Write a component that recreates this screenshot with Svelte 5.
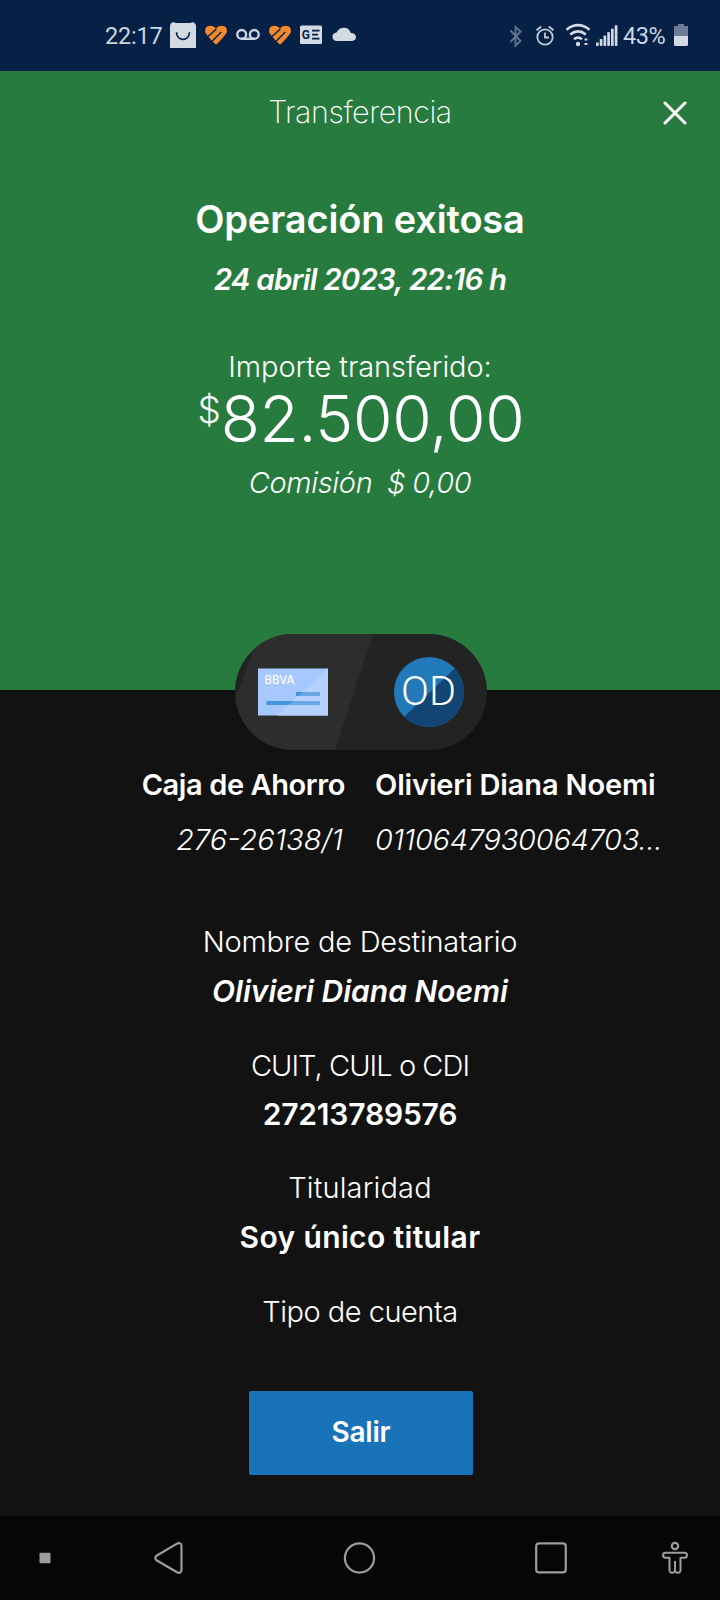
<script>
  // Transfer receipt data
  let title = 'Transferencia';
  let status = 'Operación exitosa';
  let date = '24 abril 2023, 22:16 h';
  let amount = '82.500,00';
  let fee = 'Comisión\u00a0 $ 0,00';

  let details = [
    { label: 'Nombre de Destinatario', value: 'Olivieri Diana Noemi', kind: 'name' },
    { label: 'CUIT, CUIL o CDI', value: '27213789576', kind: 'cuit' },
    { label: 'Titularidad', value: 'Soy único titular', kind: 'holder' },
    { label: 'Tipo de cuenta', value: '', kind: 'type' }
  ];

  // Bars of the mobile signal icon, left to right
  let signalBars = [0, 1, 2, 3, 4, 5];
</script>

{#snippet heart()}
  <svg class="heart" width="22" height="28" viewBox="204 21 22 28">
    <path d="M215 44.300Q213 44 204.800 33.500Q203 29 206 26.600Q210.500 24.300 215 28.200Q219.500 24.300 224 26.600Q227 29 225.200 33.500Q217 44 215 44.300z" fill="#f58a2c" />
    <path d="M205.500 38L215.500 28.800M210.800 41.500L220.300 32" fill="none" stroke="#07214a" stroke-width="1.500" />
  </svg>
{/snippet}

<div class="screen">
  <div class="status-bar">
    <span class="clock">22:17</span>
    <div class="notifications">
      <svg width="26" height="28" viewBox="170 21 26 28">
        <path d="M173 22.300h1.200q.6 0 1.200.7h15.400q.5-.7 1.200-.7h1q3 1 3 4V48h-26V26.500q0-3.500 3-4.200z" fill="#d3dae3" />
        <path d="M176.500 32.300c.5 9.400 12.500 9.400 13 0" fill="none" stroke="#07214a" stroke-width="1.700" />
      </svg>
      {@render heart()}
      <svg width="24" height="28" viewBox="235 21 24 28">
        <g fill="none" stroke="#ccd5e0" stroke-width="2.400">
          <circle cx="240.700" cy="34.400" r="4.400" />
          <circle cx="253.300" cy="34.400" r="4.400" />
          <path d="M240.700 38.800h12.600" />
        </g>
      </svg>
      {@render heart()}
      <svg width="22" height="28" viewBox="300 21 22 28">
        <rect x="300" y="25.500" width="22" height="18.500" rx="1.500" fill="#d3dae3" />
        <text x="301.800" y="39" class="ge">G</text>
        <path d="M312 30.700h7.500M312 34.700h6M312 38.700h7.500" stroke="#07214a" stroke-width="1.800" />
      </svg>
      <svg width="25" height="28" viewBox="331 21 25 28">
        <path d="M335.500 41q-4-.5-4-4.300 0-3.700 4-4.200 2.300-4.800 7.300-4.800 5.400 0 7 5.300 5 .3 5.200 4 0 3.600-4 4z" fill="#d3dae3" />
      </svg>
    </div>

    <div class="system">
      <svg width="14" height="28" viewBox="509 21 14 28">
        <path d="M510.500 30.500l10 10.500-5 4.500V27l5 4.500-10 10.500" fill="none" stroke="#61738d" stroke-width="1.900" />
      </svg>
      <svg class="alarm" width="20" height="28" viewBox="535 21 20 28">
        <g fill="none" stroke="#c3cdd9" stroke-width="1.800">
          <circle cx="545" cy="37" r="7.700" />
          <path d="M545 32.500v5h4M536.500 30.200l4.800-3.700M553.500 30.200l-4.800-3.700" />
        </g>
      </svg>
      <svg class="wifi" width="28" height="28" viewBox="565 21 28 28">
        <g fill="none" stroke="#d3dae3" stroke-width="2.600">
          <path d="M566.500 29.700q11.500-9 23 0" />
          <path d="M570.200 34.500q7.800-6.300 15.600 0" />
          <path d="M574 39.200q4-3.200 8 0" />
        </g>
        <circle cx="578" cy="44" r="2.200" fill="#d3dae3" />
        <path d="M584.500 39.500h4M584.500 44h4" stroke="#d3dae3" stroke-width="2" stroke-dasharray="2.800 1" />
      </svg>
      <svg class="signal" width="22" height="28" viewBox="596 21 22 28">
        {#each signalBars as i}
          <rect x={596 + i * 3.75} y={42.5 - i * 3.45} width="2.700" height={3.4 + i * 3.45} fill="#d3dae3" />
        {/each}
      </svg>
      <span class="percent">43%</span>
      <svg class="battery" width="14" height="28" viewBox="674 21 14 28">
        <path d="M678 24h6v2h4v10h-14V26h4z" fill="#6b7c94" />
        <path d="M674 36h14v8.500q0 1.500-1.500 1.500h-11q-1.500 0-1.500-1.500z" fill="#d3dae3" />
      </svg>
    </div>
  </div>

  <header class="hero">
    <h1>{title}</h1>
    <button class="close" aria-label="Cerrar">
      <svg width="24" height="24" viewBox="0 0 24 24">
        <path d="M2 2l20 20M22 2l-20 20" stroke="#fff" stroke-width="3" stroke-linecap="round" />
      </svg>
    </button>
    <h2>{status}</h2>
    <p class="date">{date}</p>
    <p class="caption">Importe transferido:</p>
    <p class="amount"><span class="currency">$</span>{amount}</p>
    <p class="fee">{fee}</p>
  </header>

  <main>
    <svg class="pill" width="252" height="116" viewBox="235 634 252 116">
      <defs>
        <clipPath id="pill-shape"><rect x="235" y="634" width="252" height="116" rx="58" /></clipPath>
        <clipPath id="avatar-shape"><circle cx="429" cy="692" r="35" /></clipPath>
      </defs>
      <g clip-path="url(#pill-shape)">
        <rect x="235" y="634" width="252" height="116" fill="#232323" />
        <path d="M259 634H373L335 750H235V700z" fill="#2d2d2d" />
      </g>
      <rect x="258" y="668.500" width="70" height="47" fill="#a5c8fe" />
      <path d="M328 668.500V715.500H277z" fill="#b4d1ff" />
      <text x="264.500" y="683.500" class="bank" textLength="30" lengthAdjust="spacingAndGlyphs">BBVA</text>
      <path d="M296 692h23.500v4H296zM266.500 701h53v4h-53z" fill="#4594d8" />
      <path d="M303 692h16.500v4H298.500zM293.500 701h26v4h-31z" fill="#68a7e4" />
      <g clip-path="url(#avatar-shape)">
        <rect x="394" y="657" width="70" height="70" fill="#237abb" />
        <path d="M404 717L454 669H470V730H404z" fill="#124474" />
      </g>
      <text x="401" y="705" class="initials" textLength="55" lengthAdjust="spacingAndGlyphs">OD</text>
    </svg>

    <div class="accounts">
      <div class="from">
        <strong>Caja de Ahorro</strong>
        <em>276-26138/1</em>
      </div>
      <div class="to">
        <strong>Olivieri Diana Noemi</strong>
        <em>0110647930064703...</em>
      </div>
    </div>

    <dl>
      {#each details as item}
        <div class="row {item.kind}">
          <dt>{item.label}</dt>
          {#if item.value}
            <dd>{item.value}</dd>
          {/if}
        </div>
      {/each}
    </dl>

    <button class="exit">Salir</button>
  </main>

  <nav>
    <svg width="720" height="84" viewBox="0 1516 720 84">
      <rect x="39.500" y="1552.800" width="11" height="10.500" rx="1" fill="#9d9d9d" />
      <g fill="none" stroke="#9d9d9d" stroke-width="2.200" stroke-linejoin="round">
        <path d="M156.500 1555.800L177 1543.600Q181.300 1542 181.500 1546V1570Q181.300 1574 177 1572.300L156.500 1560.200Q154 1558 156.500 1555.800z" />
        <circle cx="359.500" cy="1558" r="14.600" />
        <rect x="536.200" y="1543.400" width="29.600" height="29" rx="3" />
        <circle cx="675" cy="1546" r="3.200" />
        <path d="M665.500 1552.800H684.500Q687 1553 687 1555.300Q687 1557.700 684.500 1557.800H680.500V1570.500Q680.300 1572.700 678 1572.700Q675.200 1572.700 675 1570.500Q674.800 1572.700 672 1572.700Q669.700 1572.700 669.500 1570.500V1557.800H665.500Q663 1557.700 663 1555.300Q663 1553 665.500 1552.800zM675 1561V1570.500" stroke-width="2" />
      </g>
    </svg>
  </nav>
</div>

<style>
  :global(body) {
    margin: 0;
    background: #121212;
  }

  .screen {
    width: 720px;
    height: 1600px;
    display: flex;
    flex-direction: column;
    overflow: hidden;
    background: #121212;
    color: #fff;
    font-family: Inter, 'Open Sans', sans-serif;
  }

  svg {
    display: block;
    flex: none;
  }

  .status-bar {
    display: flex;
    align-items: flex-start;
    box-sizing: border-box;
    height: 71px;
    padding: 21px 32px 0 105px;
    background: #062046;
    color: #ccd5e0;
    font: 400 23.5px/31px Roboto, sans-serif;
  }

  .clock {
    width: 57px;
    letter-spacing: -0.2px;
  }

  .notifications {
    display: flex;
    gap: 9.5px;
    margin-left: 8px;
  }

  .heart {
    margin-left: -1px;
  }

  .ge {
    font: 700 12px Roboto, sans-serif;
    fill: #07214a;
  }

  .system {
    display: flex;
    margin-left: auto;
  }

  .alarm {
    margin-left: 12px;
  }

  .wifi {
    margin-left: 10px;
  }

  .signal {
    margin-left: 3px;
  }

  .percent {
    width: 43px;
    margin-left: 5px;
    letter-spacing: -0.4px;
  }

  .battery {
    margin-left: 8px;
  }

  .hero {
    position: relative;
    box-sizing: border-box;
    height: 619px;
    padding-top: 21px;
    background: #277b3e;
    text-align: center;
  }

  h1,
  h2,
  p,
  dl,
  dd {
    margin: 0;
  }

  h1 {
    font-size: 30.5px;
    font-weight: 250;
    line-height: 40px;
    letter-spacing: -0.45px;
  }

  .close {
    position: absolute;
    top: 30px;
    right: 33px;
    padding: 0;
    border: 0;
    background: none;
  }

  h2 {
    margin-top: 67px;
    font-size: 38px;
    font-weight: 600;
    line-height: 40px;
    letter-spacing: -0.15px;
  }

  .date,
  .caption,
  .fee {
    font-size: 29px;
    font-weight: 330;
    line-height: 40px;
  }

  .date {
    margin-top: 20px;
    font-size: 29.5px;
    font-style: italic;
    font-weight: 600;
    letter-spacing: -0.8px;
  }

  .caption {
    margin-top: 48px;
    letter-spacing: -0.1px;
  }

  .amount {
    padding-left: 2px;
    font-size: 64px;
    font-weight: 320;
    line-height: 64px;
    letter-spacing: -0.3px;
    white-space: nowrap;
  }

  .currency {
    position: relative;
    top: -19px;
    font-size: 37px;
    line-height: 1;
  }

  .fee {
    margin-top: 12px;
    font-style: italic;
    letter-spacing: -0.35px;
    word-spacing: -0.5px;
  }

  main {
    display: flex;
    flex: 1;
    flex-direction: column;
    align-items: center;
  }

  .pill {
    position: relative;
    margin-top: -56px;
    margin-left: 2px;
  }

  .bank {
    font: 500 11.5px Inter, sans-serif;
    fill: #fff;
  }

  .initials {
    font: 300 40px Roboto, sans-serif;
    fill: #fff;
  }

  .accounts {
    display: grid;
    grid-template-columns: 345px 345px;
    column-gap: 30px;
    width: 720px;
    margin-top: 15px;
    font-size: 29px;
    line-height: 40px;
    white-space: nowrap;
  }

  .from {
    text-align: right;
  }

  .accounts strong,
  .accounts em {
    display: block;
  }

  .accounts strong {
    font-weight: 600;
    letter-spacing: -0.15px;
  }

  .accounts .from strong {
    letter-spacing: -0.4px;
  }

  .accounts em {
    margin-top: 15px;
    font-weight: 320;
    letter-spacing: -0.25px;
  }

  .accounts .from em {
    padding-right: 2px;
    letter-spacing: 0;
  }

  dl {
    display: grid;
    row-gap: 35px;
    margin-top: 62px;
    text-align: center;
    line-height: 40px;
  }

  dt {
    font-size: 29px;
    font-weight: 320;
    letter-spacing: -0.25px;
  }

  dd {
    margin-top: 9px;
    font-size: 30px;
    font-weight: 600;
  }

  .name dd {
    font-style: italic;
  }

  .cuit dt {
    letter-spacing: -0.95px;
  }

  .cuit dd {
    margin-top: 8px;
    letter-spacing: -0.2px;
  }

  .holder {
    margin-top: -1px;
  }

  .holder dt {
    letter-spacing: 0.15px;
  }

  .holder dd {
    letter-spacing: 0.36px;
  }

  .type dt {
    letter-spacing: -0.5px;
  }

  .exit {
    width: 224px;
    height: 84px;
    margin-top: 59px;
    margin-left: 2px;
    padding: 0 0 2px;
    border: 0;
    border-radius: 2px;
    background: #1973b8;
    color: #fff;
    font: 600 28px/40px Inter, sans-serif;
    letter-spacing: -0.2px;
  }

  nav {
    height: 84px;
    background: #060606;
  }
</style>
